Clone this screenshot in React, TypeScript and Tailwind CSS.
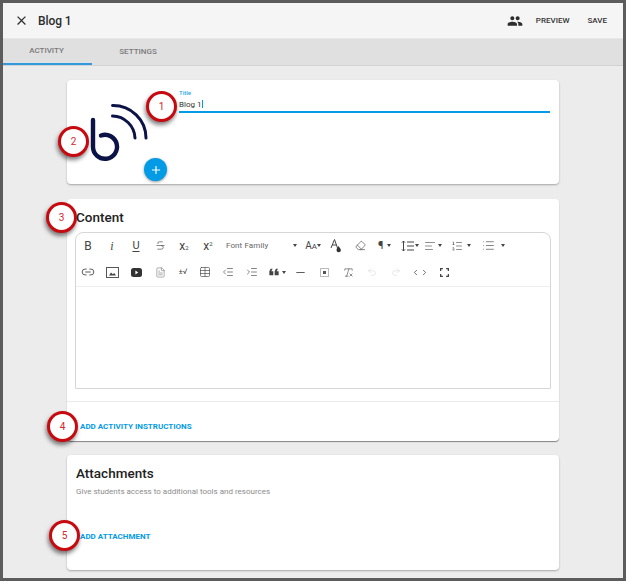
import React from "react";
import { MdClose, MdPeople, MdFormatQuote, MdAdd } from "react-icons/md";
import {
  Link2, Table, AlignLeft, List, ListOrdered, Undo2, Redo2, ChevronLeft, ChevronRight,
  Minus, Eraser, RemoveFormatting, IndentDecrease, IndentIncrease, FileText, Strikethrough,
} from "lucide-react";

const Caret = () => <span className="inline-block h-0 w-0 border-x-[2.5px] border-t-[3px] border-x-transparent border-t-[#444]" />;

function Cell({ w = "w-6", align = "justify-center", children }: { w?: string; align?: string; children: React.ReactNode }) {
  return <div className={`${w} ${align} flex h-6 shrink-0 items-center text-[#444]`}>{children}</div>;
}

function Badge({ n, className }: { n: number; className: string }) {
  return (
    <div className={`absolute flex h-[31px] w-[31px] items-center justify-center rounded-full border-[3px] border-[#c60a0f] bg-white text-[10px] text-[#d6242a] shadow-[-1px_3px_4px_rgba(0,0,0,0.5)] ${className}`}>
      {n}
    </div>
  );
}

function Logo() {
  return (
    <svg className="absolute left-[84px] top-[100px]" width="70" height="66" viewBox="84 100 70 66" fill="none" stroke="#0c1347" strokeLinecap="round">
      <path d="M93 120 V147 A12 12 0 1 0 101 135.5" strokeWidth="4.4" />
      <path d="M112.5 105.5 A33 33 0 0 1 146 138" strokeWidth="3" />
      <path d="M112.5 116 A23 23 0 0 1 135 138" strokeWidth="3" />
    </svg>
  );
}

function ImageIcon() {
  return (
    <svg width="13" height="11" viewBox="0 0 13 11" fill="none">
      <rect x="0.5" y="0.5" width="12" height="10" stroke="#555" strokeWidth="1" />
      <path d="M3 8.5 L5 5.5 L6.8 7.2 L8.2 6 L10 8.5 Z" fill="#444" />
    </svg>
  );
}

function VideoIcon() {
  return (
    <svg width="11" height="9" viewBox="0 0 11 9">
      <rect width="11" height="9" rx="2.5" fill="#333" />
      <path d="M4.4 2.6 L7.2 4.5 L4.4 6.4 Z" fill="#fff" />
    </svg>
  );
}

function DropA() {
  return (
    <svg width="12" height="15" viewBox="0 0 12 15" fill="none">
      <path d="M1 10 L4.5 1.5 L7.5 10 M2.3 7 H6.6" stroke="#444" strokeWidth="1" />
      <path d="M8.5 8 C7 10.4 6.5 11 6.5 12 A2.2 2.2 0 0 0 10.9 12 C10.9 11 10 10.4 8.5 8 Z" fill="#333" />
    </svg>
  );
}

function SelectBox() {
  return (
    <svg width="9" height="9" viewBox="0 0 9 9" fill="none">
      <rect x="0.5" y="0.5" width="8" height="8" stroke="#777" strokeDasharray="1 1" />
      <rect x="3" y="3" width="3" height="3" fill="#555" />
    </svg>
  );
}

function Fullscreen() {
  return (
    <svg width="9" height="9" viewBox="0 0 10 10" fill="none" stroke="#444" strokeWidth="1.4">
      <path d="M0.7 3.2 V0.7 H3.2 M6.8 0.7 H9.3 V3.2 M9.3 6.8 V9.3 H6.8 M3.2 9.3 H0.7 V6.8" />
    </svg>
  );
}

function LineHeight() {
  return (
    <svg width="13" height="12" viewBox="0 0 13 12" fill="none" stroke="#444" strokeWidth="1">
      <path d="M2.5 1 V11 M1 2.6 L2.5 1 L4 2.6 M1 9.4 L2.5 11 L4 9.4 M6 2 H13 M6 6 H13 M6 10 H13" />
    </svg>
  );
}

export default function App() {
  return (
    <div className="relative h-[581px] w-[626px] overflow-hidden border-[3px] border-[#5c5c5c] bg-[#ececec] font-['Roboto',sans-serif]">
      <header className="flex h-[35px] items-center bg-[#f5f5f5] pl-[11px] pr-[16px] text-[#333]">
        <MdClose size={15} className="text-[#333]" />
        <h1 className="ml-[9px] text-[12px] font-medium tracking-[-0.1px] text-[#2c2c2c]">Blog 1</h1>
        <MdPeople size={16} className="ml-auto text-[#2c2c2c]" />
        <span className="ml-[13px] text-[8px] font-medium text-[#333]">PREVIEW</span>
        <span className="ml-[18px] text-[8px] font-medium text-[#333]">SAVE</span>
      </header>
      <nav className="flex h-[28px] border-t border-b border-t-[#e8e8e8] border-b-[#d2d2d2] bg-[#e0e0e0] text-[8px] font-medium text-[#7a7a7a]">
        <div className="flex w-[89px] items-center justify-center border-b-2 border-[#2f9bdc] pr-[2px]">ACTIVITY</div>
        <div className="flex w-[94px] items-center justify-center pr-[2px]">SETTINGS</div>
      </nav>

      <main className="flex flex-col gap-[15px] px-16 pt-[14px]">
        <section className="relative h-[104px] rounded-sm bg-white pl-[112px] pr-[9px] pt-[9px] shadow-[0_1px_2px_rgba(0,0,0,0.3)]">
          <label className="block text-[6px] leading-[7px] font-medium text-[#29a9ea]">Title</label>
          <div className="mt-[3px] h-[14px] border-b-2 border-[#039be5] text-[8px] leading-[11px] text-[#333]">
            Blog 1<span className="ml-px inline-block h-[8px] w-px translate-y-px bg-[#039be5]" />
          </div>
          <button className="absolute left-[77px] top-[78px] flex h-[23px] w-[23px] items-center justify-center rounded-full bg-[#039be5] text-white shadow-[0_1px_3px_rgba(0,0,0,0.4)]">
            <MdAdd size={14} />
          </button>
        </section>

        <section className="h-[242px] rounded-sm bg-white pt-[10px] shadow-[0_1px_1px_rgba(0,0,0,0.45)]">
          <h2 className="px-[9px] text-[13.5px] leading-[17px] font-medium text-[#222]">Content</h2>
          <div className="mx-2 mt-[6px] h-[157px] rounded-t-[8px] border border-[#d6d6d6]">
            <div className="flex h-[25px] items-center">
              <Cell><span className="text-[12px] leading-none">B</span></Cell>
              <Cell><span className="font-['Liberation_Serif',serif] text-[12px] italic leading-none">i</span></Cell>
              <Cell><span className="text-[11px] leading-none underline underline-offset-2">U</span></Cell>
              <Cell><Strikethrough size={11} strokeWidth={1.4} /></Cell>
              <Cell><span className="text-[12px] leading-none">x<span className="text-[6px]">2</span></span></Cell>
              <Cell><span className="text-[12px] leading-none">x<span className="relative -top-[4px] text-[6px]">2</span></span></Cell>
              <div className="flex h-6 w-[82px] shrink-0 items-center pl-[6px] pr-[5px] text-[8px] tracking-[0.1px] text-[#666]">Font Family<span className="ml-auto flex"><Caret /></span></div>
              <Cell w="w-[22px]"><span className="text-[10px] leading-none">A<span className="text-[8px]">A</span></span><Caret /></Cell>
              <Cell><DropA /></Cell>
              <Cell><Eraser size={11} strokeWidth={1.4} /></Cell>
              <Cell w="w-[26px]" align="justify-start pl-[6px] gap-[4px]"><span className="text-[11px] leading-none">¶</span><Caret /></Cell>
              <Cell w="w-[23px]" align="justify-start pl-[3px] gap-px"><LineHeight /><Caret /></Cell>
              <Cell w="w-[25px]" align="justify-start pl-[3px] gap-[2px]"><AlignLeft size={12} strokeWidth={1.2} /><Caret /></Cell>
              <Cell w="w-[34px]" align="justify-start pl-[5px] gap-[4px]"><ListOrdered size={12} strokeWidth={1.2} /><Caret /></Cell>
              <Cell w="w-[30px]" align="justify-start pl-[2px] gap-[6px]"><List size={13} strokeWidth={1.2} /><Caret /></Cell>
            </div>
            <div className="flex h-[29px] items-center border-b border-[#eeeeee]">
              <Cell><Link2 size={14} strokeWidth={1.5} /></Cell>
              <Cell><ImageIcon /></Cell>
              <Cell><VideoIcon /></Cell>
              <Cell><FileText size={11} strokeWidth={1.3} className="text-[#777]" /></Cell>
              <Cell w="w-[22px]"><span className="text-[8px] text-[#444]">±√</span></Cell>
              <Cell w="w-[22px]"><Table size={12} strokeWidth={1.3} /></Cell>
              <Cell><IndentDecrease size={12} strokeWidth={1.3} /></Cell>
              <Cell><IndentIncrease size={12} strokeWidth={1.3} /></Cell>
              <Cell><MdFormatQuote size={16} className="rotate-180" /><Caret /></Cell>
              <Cell><Minus size={13} strokeWidth={1.6} /></Cell>
              <Cell><SelectBox /></Cell>
              <Cell><RemoveFormatting size={11} strokeWidth={1.3} /></Cell>
              <Cell><Undo2 size={10} strokeWidth={1.3} className="text-[#d4d4d4]" /></Cell>
              <Cell><Redo2 size={10} strokeWidth={1.3} className="text-[#d4d4d4]" /></Cell>
              <Cell><span className="flex"><ChevronLeft size={9} strokeWidth={2} /><ChevronRight size={9} strokeWidth={2} /></span></Cell>
              <Cell><Fullscreen /></Cell>
            </div>
          </div>
          <div className="mt-[12px] border-t border-[#eaeaea] pr-[4px] pt-[20px] pl-[13px] text-[8px] leading-[10px] font-bold text-[#039be5]">
            ADD ACTIVITY INSTRUCTIONS
          </div>
        </section>

        <section className="-mt-px h-[115px] rounded-sm bg-white px-[9px] pt-[10px] shadow-[0_1px_2px_rgba(0,0,0,0.3)]">
          <h2 className="text-[13.5px] leading-[17px] font-medium text-[#222]">Attachments</h2>
          <p className="mt-[5px] text-[8px] leading-[10px] text-[#8c8c8c]">Give students access to additional tools and resources</p>
          <div className="mt-[35px] pl-[4px] text-[8px] leading-[10px] font-bold text-[#039be5]">ADD ATTACHMENT</div>
        </section>
      </main>

      <div className="pointer-events-none absolute left-[-3px] top-[-3px] h-[581px] w-[626px]">
        <Logo />
        <Badge n={1} className="left-[146px] top-[91px]" />
        <Badge n={2} className="left-[58px] top-[126px]" />
        <Badge n={3} className="left-[46px] top-[202px]" />
        <Badge n={4} className="left-[47px] top-[411px]" />
        <Badge n={5} className="left-[49px] top-[520px]" />
      </div>
    </div>
  );
}
